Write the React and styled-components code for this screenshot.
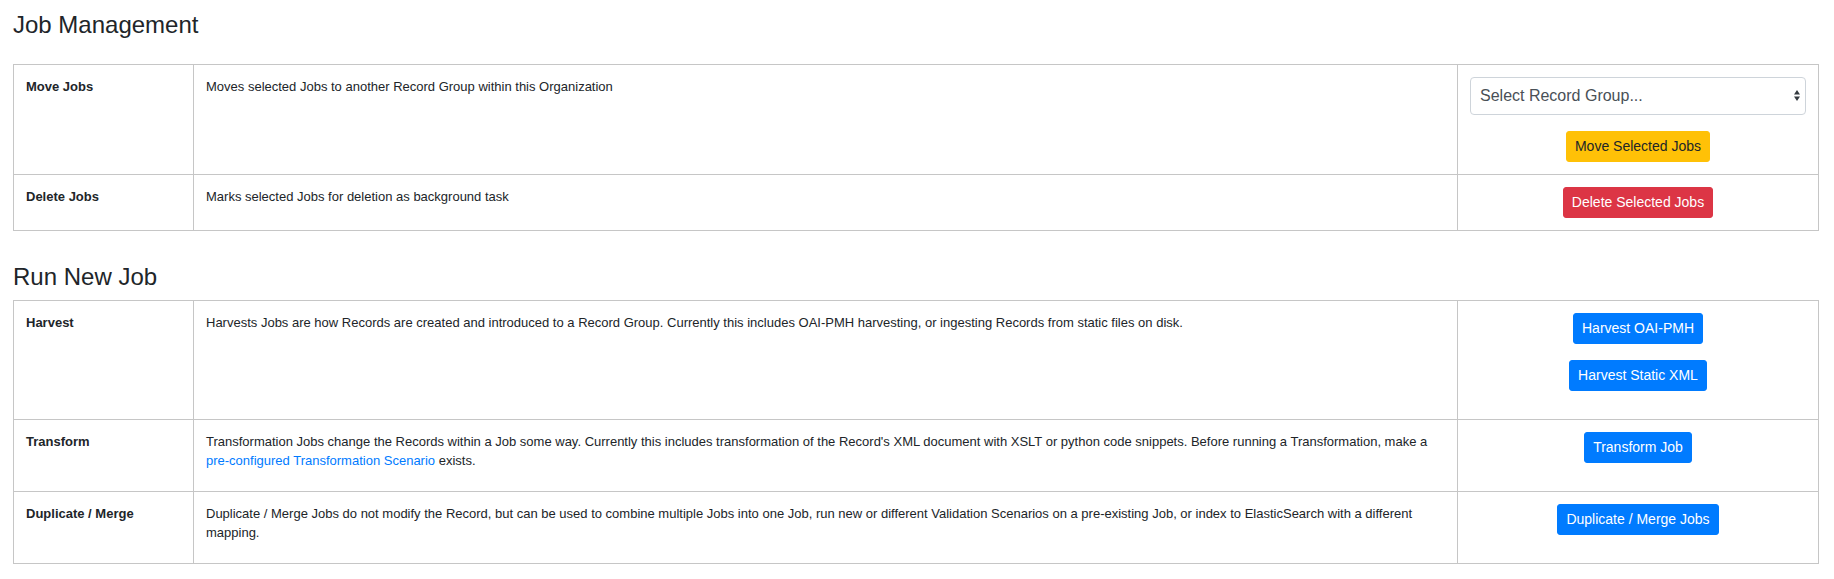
import React from 'react';
import styled, { createGlobalStyle } from 'styled-components';

const GlobalStyle = createGlobalStyle`
  body {
    margin: 0;
    background: #fff;
    font-family: "Liberation Sans", Arial, sans-serif;
    color: #212529;
  }
`;

// Page wrapper
const Page = styled.div`
  padding: 0 15px 0 13px;
`;

const SectionTitle = styled.h4`
  font-size: 24px;
  line-height: 1.2;
  font-weight: 400;
  color: #212529;
  margin: ${({ $first }) => ($first ? '11px 0 24px' : '32px 0 8px')};
`;

// Bordered table
const Table = styled.table`
  width: 100%;
  border-collapse: collapse;
  table-layout: fixed;
  border: 1px solid #c6c6c6;
  font-size: 13px;
  line-height: 1.5;
`;

const Cell = styled.td`
  border: 1px solid #c6c6c6;
  padding: 12px;
  vertical-align: top;
  text-align: ${({ $center }) => ($center ? 'center' : 'left')};
`;

const Label = styled.span`
  font-weight: 700;
`;

const Link = styled.a`
  color: #007bff;
  text-decoration: none;
`;

// Select box with double arrow
const SelectWrap = styled.div`
  position: relative;
  margin-bottom: 16px;
`;

const Select = styled.select`
  display: block;
  width: 100%;
  height: 38px;
  padding: 6px 28px 6px 9px;
  font-family: "Liberation Sans", Arial, sans-serif;
  font-size: 16px;
  color: #495057;
  background: #fff;
  border: 1px solid #ced4da;
  border-radius: 4px;
  appearance: none;
  -webkit-appearance: none;
`;

const Arrows = styled.svg`
  position: absolute;
  right: 6px;
  top: 13px;
  pointer-events: none;
`;

// Buttons
const variants = {
  warning: { bg: '#ffc107', fg: '#212529' },
  danger: { bg: '#dc3545', fg: '#fff' },
  primary: { bg: '#007bff', fg: '#fff' },
};

const ActionStack = styled.div`
  display: flex;
  flex-direction: column;
  align-items: center;
  gap: 16px;
  padding-bottom: ${({ $spaced }) => ($spaced ? '16px' : '0')};
`;

const Button = styled.button`
  display: inline-block;
  padding: 4px 8px;
  font-family: "Liberation Sans", Arial, sans-serif;
  font-size: 14px;
  line-height: 1.5;
  border-radius: 3px;
  cursor: pointer;
  background-color: ${({ $variant }) => variants[$variant].bg};
  border: 1px solid ${({ $variant }) => variants[$variant].bg};
  color: ${({ $variant }) => variants[$variant].fg};

  &:hover {
    opacity: 0.9;
  }
`;

const ColGroup = () => (
  <colgroup>
    <col style={{ width: 180 }} />
    <col />
    <col style={{ width: 361 }} />
  </colgroup>
);

const runJobs = [
  {
    label: 'Harvest',
    text: 'Harvests Jobs are how Records are created and introduced to a Record Group. Currently this includes OAI-PMH harvesting, or ingesting Records from static files on disk.',
    buttons: ['Harvest OAI-PMH', 'Harvest Static XML'],
  },
  {
    label: 'Transform',
    text: (
      <>
        Transformation Jobs change the Records within a Job some way. Currently this includes transformation of the Record's XML document with XSLT or python code snippets. Before running a Transformation, make a{' '}
        <Link href="#">pre-configured Transformation Scenario</Link> exists.
      </>
    ),
    buttons: ['Transform Job'],
  },
  {
    label: 'Duplicate / Merge',
    text: 'Duplicate / Merge Jobs do not modify the Record, but can be used to combine multiple Jobs into one Job, run new or different Validation Scenarios on a pre-existing Job, or index to ElasticSearch with a different mapping.',
    buttons: ['Duplicate / Merge Jobs'],
  },
];

const App = () => {
  return (
    <Page>
      <GlobalStyle />
      <SectionTitle $first>Job Management</SectionTitle>
      <Table>
        <ColGroup />
        <tbody>
          <tr>
            <Cell><Label>Move Jobs</Label></Cell>
            <Cell>Moves selected Jobs to another Record Group within this Organization</Cell>
            <Cell $center>
              <SelectWrap>
                <Select defaultValue="">
                  <option value="">Select Record Group...</option>
                </Select>
                <Arrows width="6" height="11" viewBox="0 0 6 11">
                  <path d="M3 0 L6 4.5 L0 4.5 Z M0 6.5 L6 6.5 L3 11 Z" fill="#343a40" />
                </Arrows>
              </SelectWrap>
              <ActionStack>
                <Button $variant="warning">Move Selected Jobs</Button>
              </ActionStack>
            </Cell>
          </tr>
          <tr>
            <Cell><Label>Delete Jobs</Label></Cell>
            <Cell>Marks selected Jobs for deletion as background task</Cell>
            <Cell $center>
              <ActionStack>
                <Button $variant="danger">Delete Selected Jobs</Button>
              </ActionStack>
            </Cell>
          </tr>
        </tbody>
      </Table>

      <SectionTitle>Run New Job</SectionTitle>
      <Table>
        <ColGroup />
        <tbody>
          {runJobs.map(job => (
            <tr key={job.label}>
              <Cell><Label>{job.label}</Label></Cell>
              <Cell>{job.text}</Cell>
              <Cell $center>
                <ActionStack $spaced>
                  {job.buttons.map(name => (
                    <Button key={name} $variant="primary">{name}</Button>
                  ))}
                </ActionStack>
              </Cell>
            </tr>
          ))}
        </tbody>
      </Table>
    </Page>
  );
};

export default App;
